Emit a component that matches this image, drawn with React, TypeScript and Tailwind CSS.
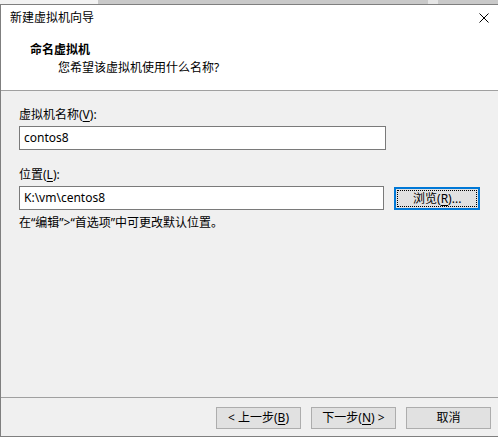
import React from "react";

const U = ({ children }: { children: React.ReactNode }) => (
  <span className="underline underline-offset-2">{children}</span>
);

const WizardButton = ({ children, className = "" }: { children: React.ReactNode; className?: string }) => (
  <button className={`h-[22px] w-[85px] border border-[#adadad] bg-[#e1e1e1] text-[12px] leading-[16px] text-black ${className}`}>
    {children}
  </button>
);

const App = () => {
  return (
    <div className="flex h-[437px] w-[498px] flex-col overflow-hidden bg-[#f0f0f0] font-['Noto_Sans','Noto_Sans_CJK_SC',sans-serif] text-[12px] leading-[16px] text-black">
      {/* desktop behind the dialog */}
      <div className="flex h-[4px] shrink-0">
        <div className="w-[98px] bg-[#f2f2f2]" />
        <div className="w-[330px] bg-[#c9c9c9]" />
        <div className="w-[10px] bg-[#e6e6e6]" />
        <div className="flex-1 bg-[#c9c9c9]" />
      </div>

      <div className="flex h-[433px] shrink-0 flex-col border-y border-l border-[#7f7f7f]">
        {/* Title + header */}
        <div className="h-[85px] shrink-0 bg-white">
          <div className="flex h-[26px] items-center justify-between pl-[9px] pr-[9px]">
            <span>新建虚拟机向导</span>
            <svg width="10" height="10" viewBox="0 0 10 10">
              <path d="M0.5 0.5 L9.5 9.5 M9.5 0.5 L0.5 9.5" stroke="#000" strokeWidth="1" fill="none" />
            </svg>
          </div>
          <div className="mt-[11px] pl-[29px] font-bold">命名虚拟机</div>
          <div className="mt-[2px] pl-[57px]">您希望该虚拟机使用什么名称?</div>
        </div>
        <div className="h-px shrink-0 bg-[#a0a0a0]" />

        {/* Body */}
        <div className="flex-1 px-[18px] pt-[16px]">
          <div>
            虚拟机名称(<U>V</U>):
          </div>
          <div className="mt-[3px] flex h-[24px] w-[367px] items-center border border-[#7a7a7a] bg-white pl-[4px]">
            contos8
          </div>

          <div className="mt-[17px]">
            位置(<U>L</U>):
          </div>
          <div className="mt-[3px] flex items-start">
            <div className="flex h-[24px] w-[367px] items-center border border-[#7a7a7a] bg-white pl-[4px]">
              K:\vm\centos8
            </div>
            <button className="ml-[10px] mt-[1px] h-[23px] w-[86px] border-2 border-[#0078d7] bg-[#e1e1e1] p-px">
              <span className="flex h-full w-full items-center justify-center border border-dotted border-black text-[12px] leading-[16px]">
                浏览(<U>R</U>)...
              </span>
            </button>
          </div>
          <div className="mt-[5px]">在“编辑”&gt;“首选项”中可更改默认位置。</div>
        </div>

        {/* Footer */}
        <div className="h-px shrink-0 bg-[#a0a0a0]" />
        <div className="flex h-[38px] shrink-0 items-start pl-[215px] pt-[9px]">
          <WizardButton>
            &lt; 上一步(<U>B</U>)
          </WizardButton>
          <WizardButton className="ml-[10px]">
            下一步(<U>N</U>) &gt;
          </WizardButton>
          <WizardButton className="ml-[10px]">取消</WizardButton>
        </div>
      </div>
    </div>
  );
};

export default App;
